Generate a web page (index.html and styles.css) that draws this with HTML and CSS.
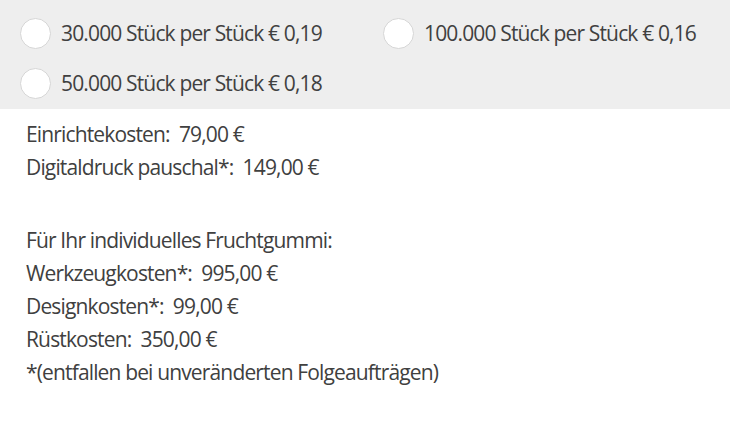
FILE: index.html
```html
<!DOCTYPE html>
<html lang="de">
<head>
    <meta charset="UTF-8">
    <meta name="viewport" content="width=device-width, initial-scale=1.0">
    <title>Preise</title>
    <link rel="stylesheet" href="styles.css">
</head>
<body>
    <form class="quantity">
        <label class="option"><input type="radio" name="qty" value="30000"> 30.000 Stück per Stück € 0,19</label>
        <label class="option"><input type="radio" name="qty" value="50000"> 50.000 Stück per Stück € 0,18</label>
        <label class="option"><input type="radio" name="qty" value="100000"> 100.000 Stück per Stück € 0,16</label>
    </form>
    <div class="costs">
        <p>Einrichtekosten:&nbsp; 79,00 €<br>
        Digitaldruck pauschal*:&nbsp; 149,00 €</p>
        <p>Für Ihr individuelles Fruchtgummi:<br>
        Werkzeugkosten*:&nbsp; 995,00 €<br>
        Designkosten*:&nbsp; 99,00 €<br>
        Rüstkosten:&nbsp; 350,00 €<br>
        *(entfallen bei unveränderten Folgeaufträgen)</p>
    </div>
</body>
</html>
```

FILE: styles.css
```css
body {
  margin: 0;
  font-family: "Open Sans", sans-serif;
  font-size: 21px;
  letter-spacing: -0.85px;
  color: #404040;
  background: #fff;
}

.quantity {
  display: grid;
  grid-auto-flow: column;
  grid-template-rows: repeat(2, 50px);
  grid-template-columns: 363px 1fr;
  padding: 8px 0 1px 20px;
  background-color: #eeeeee;
}

.option {
  display: flex;
  align-items: center;
  gap: 10px;
  cursor: pointer;
}

.option input {
  appearance: none;
  -webkit-appearance: none;
  margin: 0;
  width: 31px;
  height: 31px;
  border: 1px solid #d6d6d6;
  border-radius: 50%;
  background: #fff;
}

.costs {
  padding: 9px 26px;
}

.costs p {
  margin: 0;
  line-height: 33px;
}

.costs p + p {
  margin-top: 40px;
}
```
